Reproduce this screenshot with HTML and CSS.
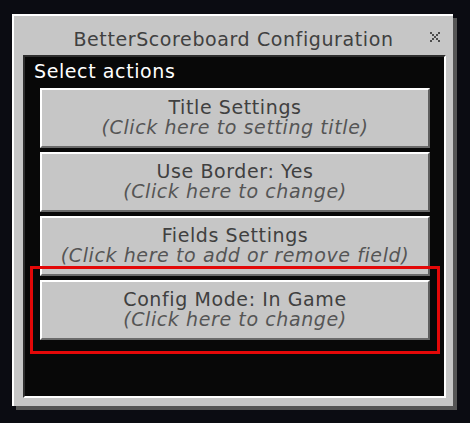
FILE: index.html
```html
<!DOCTYPE html>
<html lang="en">
<head>
<meta charset="utf-8">
<title>BetterScoreboard Configuration</title>
<link rel="stylesheet" href="styles.css">
</head>
<body>
<div class="window">
  <div class="titlebar">
    <span class="spacer"></span>
    <span class="title">BetterScoreboard Configuration</span>
    <span class="close" aria-label="Close">
      <svg width="10" height="10" viewBox="0 0 10 10" shape-rendering="crispEdges">
        <g fill="#4c4c4c">
          <rect x="0" y="0" width="2" height="2"/>
          <rect x="8" y="0" width="2" height="2"/>
          <rect x="2" y="2" width="2" height="2"/>
          <rect x="6" y="2" width="2" height="2"/>
          <rect x="4" y="4" width="2" height="2"/>
          <rect x="2" y="6" width="2" height="2"/>
          <rect x="6" y="6" width="2" height="2"/>
          <rect x="0" y="8" width="2" height="2"/>
          <rect x="8" y="8" width="2" height="2"/>
        </g>
      </svg>
    </span>
  </div>
  <div class="content">
    <div class="heading">Select actions</div>
    <div class="buttons">
      <div class="btn">
        <span class="label">Title Settings</span>
        <span class="hint">(Click here to setting title)</span>
      </div>
      <div class="btn">
        <span class="label">Use Border: Yes</span>
        <span class="hint">(Click here to change)</span>
      </div>
      <div class="btn">
        <span class="label">Fields Settings</span>
        <span class="hint">(Click here to add or remove field)</span>
      </div>
      <div class="btn highlighted">
        <span class="label">Config Mode: In Game</span>
        <span class="hint">(Click here to change)</span>
        <span class="marker"></span>
      </div>
    </div>
  </div>
</div>
</body>
</html>
```

FILE: styles.css
```css
* {
  box-sizing: border-box;
}

html, body {
  margin: 0;
  padding: 0;
}

body {
  width: 470px;
  height: 423px;
  overflow: hidden;
  background: #0b0c12;
  font-family: "DejaVu Sans", "Liberation Sans", sans-serif;
  font-size: 19px;
  line-height: 20px;
  letter-spacing: 0.6px;
  padding-top: 14px;
  padding-left: 12px;
}

.window {
  width: 441px;
  height: 392px;
  background: #c6c6c6;
  border-top: 2px solid #ffffff;
  border-left: 2px solid #ffffff;
  box-shadow: 4px 4px 0 #555555;
  display: flex;
  flex-direction: column;
}

.titlebar {
  height: 39px;
  padding-top: 13px;
  display: grid;
  grid-template-columns: 1fr auto 1fr;
  align-items: start;
}

.title {
  color: #404040;
  white-space: nowrap;
}

.close {
  justify-self: end;
  margin-right: 13px;
  margin-top: 3px;
  width: 10px;
  height: 10px;
  display: block;
}

.close svg {
  display: block;
}

.content {
  margin-left: 9px;
  width: 423px;
  height: 343px;
  background: #080808;
  border-top: 2px solid #2e2e2e;
  border-left: 2px solid #2e2e2e;
  border-right: 2px solid #ffffff;
  border-bottom: 2px solid #ffffff;
  padding-top: 4px;
}

.heading {
  color: #ffffff;
  padding-left: 9px;
}

.buttons {
  margin-top: 7px;
  margin-left: 15px;
  width: 390px;
  display: flex;
  flex-direction: column;
  gap: 4px;
}

.btn {
  position: relative;
  height: 60px;
  background: #c6c6c6;
  border-top: 2px solid #ffffff;
  border-left: 2px solid #ffffff;
  border-right: 2px solid #5e5e5e;
  border-bottom: 2px solid #6a6a6a;
  display: flex;
  flex-direction: column;
  align-items: center;
  justify-content: center;
  padding-bottom: 3px;
}

.label {
  color: #404040;
  white-space: nowrap;
}

.hint {
  color: #555555;
  font-style: italic;
  white-space: nowrap;
}

.marker {
  position: absolute;
  top: -16px;
  left: -12px;
  right: -12px;
  bottom: -16px;
  border: 3px solid #e30808;
  pointer-events: none;
}
```
